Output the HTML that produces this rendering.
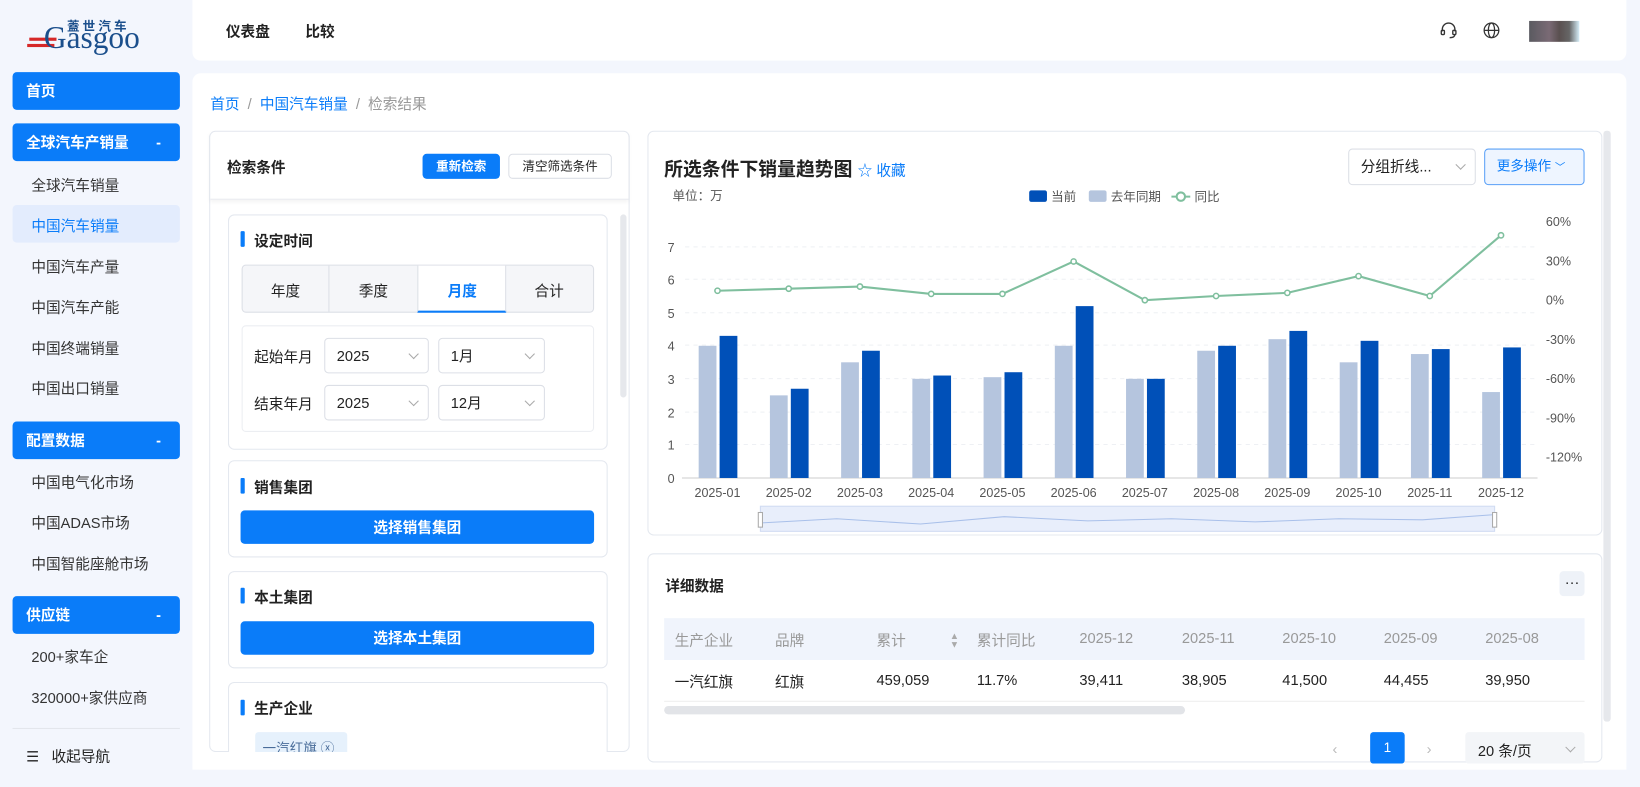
<!DOCTYPE html>
<html><head><meta charset="utf-8"><style>
*{margin:0;padding:0;box-sizing:border-box}
html,body{width:1640px;height:786px;overflow:hidden;background:#f3f6fd}
#w{position:absolute;left:0;top:0;width:1568px;height:752px;transform:scale(1.04592);transform-origin:0 0;font-family:"Liberation Sans","Noto Sans CJK SC",sans-serif;color:#222;font-size:14px;overflow:hidden;background:#f3f6fd}
.a{position:absolute}
.nav{left:12px;width:160px;height:36px;background:#0a7cf9;border-radius:4px;color:#fff;font-weight:bold;font-size:14px;padding-left:13px;line-height:36px}
.nav span{position:absolute;right:18px}
.sub{left:30px;font-size:14px;color:#333}
.card{background:#fff;border:1px solid #e4e8ef;border-radius:6px}
.bar{width:4px;height:15px;background:#0a7cf9;border-radius:1px}
.h{font-weight:bold;font-size:14px}
.btn{background:#0a7cf9;color:#fff;border-radius:4px;text-align:center;font-size:14px;font-weight:bold}
.sel{border:1px solid #dcdfe6;border-radius:4px;background:#fff;height:34px;line-height:32px;padding-left:11px;font-size:14px}
.chev{position:absolute;right:10px;top:11px;width:7px;height:7px;border-right:1px solid #aaa;border-bottom:1px solid #aaa;transform:rotate(45deg)}
.th{top:602px;color:#999;font-size:14px}
.td{top:642px;font-size:14px;color:#222}
</style></head><body><div id="w">
<div class="a" style="left:28px;top:22px;width:115px;height:30px">
<div class="a" style="left:36px;top:-6px;font-size:12px;font-weight:bold;color:#1b4f8c;letter-spacing:3px">蓋世汽车</div>
<div class="a" style="left:0;top:14px;width:26px;height:3px;background:#d62828"></div>
<div class="a" style="left:-2px;top:20px;width:26px;height:3px;background:#d62828"></div>
<div class="a" style="left:14px;top:0px;font-family:'Liberation Serif',serif;font-size:30px;color:#1b4f8c;line-height:30px">Gasgoo</div>
</div>
<div class="a nav" style="top:69px">首页</div>
<div class="a nav" style="top:118px">全球汽车产销量<span>-</span></div>
<div class="a sub" style="top:167px">全球汽车销量</div>
<div class="a" style="left:12px;top:196px;width:160px;height:36px;background:#e3ecfd;border-radius:4px"></div>
<div class="a sub" style="top:206px;color:#0a7cf9">中国汽车销量</div>
<div class="a sub" style="top:245px">中国汽车产量</div>
<div class="a sub" style="top:284px">中国汽车产能</div>
<div class="a sub" style="top:323px">中国终端销量</div>
<div class="a sub" style="top:361px">中国出口销量</div>
<div class="a nav" style="top:403px">配置数据<span>-</span></div>
<div class="a sub" style="top:451px">中国电气化市场</div>
<div class="a sub" style="top:490px">中国ADAS市场</div>
<div class="a sub" style="top:529px">中国智能座舱市场</div>
<div class="a nav" style="top:570px">供应链<span>-</span></div>
<div class="a sub" style="top:618px">200+家车企</div>
<div class="a sub" style="top:657px">320000+家供应商</div>
<div class="a" style="left:12px;top:696px;width:160px;height:1px;background:#e3e6ec"></div>
<div class="a" style="left:25px;top:713px;font-size:14px">☰&nbsp;&nbsp; 收起导航</div>

<div class="a" style="left:184px;top:0;width:1371px;height:58px;background:#fff;border-radius:0 0 8px 8px"></div>
<div class="a h" style="left:216px;top:20px">仪表盘</div>
<div class="a h" style="left:292px;top:20px">比较</div>
<svg class="a" style="left:1376px;top:20px" width="18" height="18" viewBox="0 0 18 18" fill="none" stroke="#333" stroke-width="1.3"><path d="M3 10V8a6 6 0 0 1 12 0v2"/><rect x="2" y="9" width="3" height="4" rx="1"/><rect x="13" y="9" width="3" height="4" rx="1"/><path d="M15 13q0 3-5 3"/></svg>
<svg class="a" style="left:1418px;top:21px" width="16" height="16" viewBox="0 0 16 16" fill="none" stroke="#333" stroke-width="1.2"><circle cx="8" cy="8" r="7"/><ellipse cx="8" cy="8" rx="3" ry="7"/><path d="M1 8h14"/></svg>
<div class="a" style="left:1462px;top:20px;width:48px;height:20px;background:linear-gradient(90deg,#5a5a60 0,#7a6a75 40%,#5a5050 60%,#666 80%,#d6eef8 100%)"></div>

<div class="a" style="left:184px;top:70px;width:1371px;height:666px;background:#fff;border-radius:8px"></div>
<div class="a" style="left:201px;top:89px;font-size:14px;color:#999"><span style="color:#0a7cf9">首页</span> &nbsp;/&nbsp; <span style="color:#0a7cf9">中国汽车销量</span> &nbsp;/&nbsp; 检索结果</div>

<div class="a card" style="left:200px;top:125px;width:402px;height:594px"></div>
<div class="a" style="left:201px;top:126px;width:400px;height:65px;border-bottom:1px solid #e8eaef;box-shadow:0 2px 4px rgba(0,0,0,.05)"></div>
<div class="a h" style="left:217px;top:150px;font-weight:bold">检索条件</div>
<div class="a btn" style="left:404px;top:147px;width:74px;height:24px;line-height:24px;font-size:12px">重新检索</div>
<div class="a" style="left:486px;top:147px;width:99px;height:24px;line-height:22px;font-size:12px;border:1px solid #dcdfe6;border-radius:4px;text-align:center">清空筛选条件</div>
<div class="a" style="left:593px;top:205px;width:6px;height:175px;background:#e6e8ec;border-radius:3px"></div>

<div class="a card" style="left:218px;top:205px;width:363px;height:225px"></div>
<div class="a bar" style="left:230px;top:221px"></div>
<div class="a h" style="left:243px;top:220px">设定时间</div>
<div class="a" style="left:231px;top:253px;width:337px;height:46px;border:1px solid #dcdfe6;border-radius:4px;background:#f5f6f9"></div>
<div class="a" style="left:314px;top:254px;width:1px;height:44px;background:#dcdfe6"></div>
<div class="a" style="left:399px;top:254px;width:85px;height:45px;background:#fff;border-bottom:2px solid #0a7cf9;border-left:1px solid #dcdfe6;border-right:1px solid #dcdfe6"></div>
<div class="a h" style="left:259px;top:268px;font-weight:normal">年度</div>
<div class="a h" style="left:343px;top:268px;font-weight:normal">季度</div>
<div class="a h" style="left:428px;top:268px;color:#0a7cf9">月度</div>
<div class="a h" style="left:511px;top:268px;font-weight:normal">合计</div>
<div class="a" style="left:231px;top:311px;width:337px;height:102px;border:1px solid #eceef2;border-radius:4px"></div>
<div class="a" style="left:243px;top:331px">起始年月</div>
<div class="a" style="left:243px;top:376px">结束年月</div>
<div class="a sel" style="left:310px;top:323px;width:100px">2025<i class="chev"></i></div>
<div class="a sel" style="left:419px;top:323px;width:102px">1月<i class="chev"></i></div>
<div class="a sel" style="left:310px;top:368px;width:100px">2025<i class="chev"></i></div>
<div class="a sel" style="left:419px;top:368px;width:102px">12月<i class="chev"></i></div>

<div class="a card" style="left:218px;top:440px;width:363px;height:93px"></div>
<div class="a bar" style="left:230px;top:457px"></div>
<div class="a h" style="left:243px;top:456px">销售集团</div>
<div class="a btn" style="left:230px;top:488px;width:338px;height:32px;line-height:32px">选择销售集团</div>
<div class="a card" style="left:218px;top:546px;width:363px;height:93px"></div>
<div class="a bar" style="left:230px;top:562px"></div>
<div class="a h" style="left:243px;top:561px">本土集团</div>
<div class="a btn" style="left:230px;top:594px;width:338px;height:32px;line-height:32px">选择本土集团</div>
<div class="a card" style="left:218px;top:652px;width:363px;height:80px"></div>
<div class="a bar" style="left:230px;top:669px"></div>
<div class="a h" style="left:243px;top:667px">生产企业</div>
<div class="a" style="left:244px;top:700px;width:88px;height:22px;background:#e6f1fc;border-radius:3px;color:#4a6d9a;font-size:13px;padding:5px 0 0 7px">一汽红旗 ⓧ</div>
<div class="a" style="left:184px;top:719px;width:1371px;height:17px;background:#fff"></div>

<div class="a card" style="left:619px;top:125px;width:913px;height:387px"></div>
<div class="a" style="left:1533px;top:125px;width:7px;height:565px;background:#e6e8ec;border-radius:3px"></div>
<div class="a" style="left:635px;top:148px;font-size:18px;font-weight:bold">所选条件下销量趋势图 <span style="font-size:14px;color:#0a7cf9;font-weight:normal">☆ 收藏</span></div>
<div class="a sel" style="left:1289px;top:142px;width:122px;height:35px">分组折线...<i class="chev"></i></div>
<div class="a sel" style="left:1419px;top:142px;width:96px;height:35px;border-color:#5aa0f7;background:#eef5ff;color:#0a7cf9;font-size:13px">更多操作 <span style="font-size:10px">﹀</span></div>
<svg class="a" style="left:0;top:0" width="1568" height="520">
<g font-family="Liberation Sans,Noto Sans CJK SC,sans-serif" font-size="12" fill="#555">
<text x="643" y="191">单位：万</text>
<rect x="984" y="182" width="17" height="11" rx="2" fill="#0050b8"/><text x="1005" y="192">当前</text>
<rect x="1041" y="182" width="17" height="11" rx="2" fill="#b5c5de"/><text x="1062" y="192">去年同期</text>
<line x1="1120" y1="188" x2="1138" y2="188" stroke="#7fbf9e" stroke-width="2"/><circle cx="1129" cy="188" r="4" fill="#fff" stroke="#7fbf9e" stroke-width="2"/><text x="1142" y="192">同比</text>
</g>
<g stroke="#eef0f4" stroke-dasharray="4 4">
<line x1="655" y1="236" x2="1470" y2="236"/><line x1="655" y1="267" x2="1470" y2="267"/><line x1="655" y1="299" x2="1470" y2="299"/><line x1="655" y1="330" x2="1470" y2="330"/><line x1="655" y1="362" x2="1470" y2="362"/><line x1="655" y1="394" x2="1470" y2="394"/><line x1="655" y1="425" x2="1470" y2="425"/>
</g>
<line x1="652" y1="457" x2="1470" y2="457" stroke="#ccc"/>
<g font-family="Liberation Sans,sans-serif" font-size="12" fill="#555" text-anchor="end">
<text x="645" y="241">7</text><text x="645" y="272">6</text><text x="645" y="304">5</text><text x="645" y="335">4</text><text x="645" y="367">3</text><text x="645" y="399">2</text><text x="645" y="430">1</text><text x="645" y="462">0</text>
</g>
<g font-family="Liberation Sans,sans-serif" font-size="12" fill="#555">
<text x="1478" y="216">60%</text><text x="1478" y="254">30%</text><text x="1478" y="291">0%</text><text x="1478" y="329">-30%</text><text x="1478" y="366">-60%</text><text x="1478" y="404">-90%</text><text x="1478" y="441">-120%</text>
</g>
<g id="bars"></g>
<g font-family="Liberation Sans,sans-serif" font-size="12" fill="#555" text-anchor="middle" id="xl"></g>
<polyline id="ln" fill="none" stroke="#7fbf9e" stroke-width="2"/>
<g id="pts"></g>
<rect x="727" y="484" width="702" height="24" fill="#e8eefb" stroke="#d0dbf2"/>
<path d="M727 500 L800 496 L880 501 L960 494 L1040 498 L1120 496 L1200 499 L1280 496 L1360 497 L1429 492" fill="none" stroke="#a9c0ea"/>
<rect x="725" y="490" width="4" height="14" fill="#fff" stroke="#aaa"/><rect x="1427" y="490" width="4" height="14" fill="#fff" stroke="#aaa"/>
</svg>

<div class="a card" style="left:619px;top:529px;width:913px;height:200px"></div>
<div class="a h" style="left:636px;top:550px">详细数据</div>
<div class="a" style="left:1491px;top:546px;width:24px;height:24px;background:#eef2f8;border-radius:4px;text-align:center;line-height:20px">···</div>
<div class="a" style="left:635px;top:591px;width:880px;height:40px;background:#f0f4fc"></div>
<div class="a" style="left:635px;top:631px;width:880px;height:40px;border-bottom:1px solid #eee"></div>
<div class="a th" style="left:645px">生产企业</div><div class="a th" style="left:741px">品牌</div><div class="a th" style="left:838px">累计 <span style="position:absolute;left:70px;font-size:9px;color:#aaa;line-height:8px;top:2px">▲<br>▼</span></div><div class="a th" style="left:934px">累计同比</div><div class="a th" style="left:1032px">2025-12</div><div class="a th" style="left:1130px">2025-11</div><div class="a th" style="left:1226px">2025-10</div><div class="a th" style="left:1323px">2025-09</div><div class="a th" style="left:1420px">2025-08</div>
<div class="a td" style="left:645px">一汽红旗</div><div class="a td" style="left:741px">红旗</div><div class="a td" style="left:838px">459,059</div><div class="a td" style="left:934px">11.7%</div><div class="a td" style="left:1032px">39,411</div><div class="a td" style="left:1130px">38,905</div><div class="a td" style="left:1226px">41,500</div><div class="a td" style="left:1323px">44,455</div><div class="a td" style="left:1420px">39,950</div>
<div class="a" style="left:635px;top:675px;width:498px;height:8px;background:#e2e4e8;border-radius:4px"></div>
<div class="a" style="left:1274px;top:708px;color:#bbb">‹</div>
<div class="a" style="left:1310px;top:700px;width:33px;height:30px;background:#0a7cf9;border-radius:3px;color:#fff;text-align:center;line-height:30px;font-size:13px">1</div>
<div class="a" style="left:1364px;top:708px;color:#bbb">›</div>
<div class="a" style="left:1401px;top:700px;width:114px;height:30px;background:#f3f5f8;border-radius:3px;padding:8px 0 0 12px;font-size:14px">20 条/页 <i class="chev" style="top:11px"></i></div>
<div class="a" style="left:184px;top:736px;width:1456px;height:50px;background:#f3f6fd"></div>
<div class="a" style="left:1555px;top:0;width:85px;height:786px;background:#f3f6fd"></div>
</div>
<script>
var cur=[4.3,2.7,3.85,3.1,3.2,5.2,3.0,4.0,4.45,4.15,3.9,3.95],last=[4.0,2.5,3.5,3.0,3.05,4.0,3.0,3.85,4.2,3.5,3.75,2.6];
var ly=[278,276,274,281,281,250,287,283,280,264,283,225];
var b='',x='',p='',pts=[];
for(var i=0;i<12;i++){var c=686+i*68.1;
b+='<rect x="'+(c-18)+'" y="'+(457-last[i]*31.6)+'" width="17" height="'+last[i]*31.6+'" fill="#b5c5de"/>';
b+='<rect x="'+(c+2)+'" y="'+(457-cur[i]*31.6)+'" width="17" height="'+cur[i]*31.6+'" fill="#0050b8"/>';
x+='<text x="'+c+'" y="475">2025-'+(i<9?'0':'')+(i+1)+'</text>';
pts.push(c+','+ly[i]);p+='<circle cx="'+c+'" cy="'+ly[i]+'" r="2.5" fill="#fff" stroke="#7fbf9e" stroke-width="1.5"/>';}
document.getElementById('bars').innerHTML=b;document.getElementById('xl').innerHTML=x;
document.getElementById('ln').setAttribute('points',pts.join(' '));document.getElementById('pts').innerHTML=p;
</script>
</body></html>
